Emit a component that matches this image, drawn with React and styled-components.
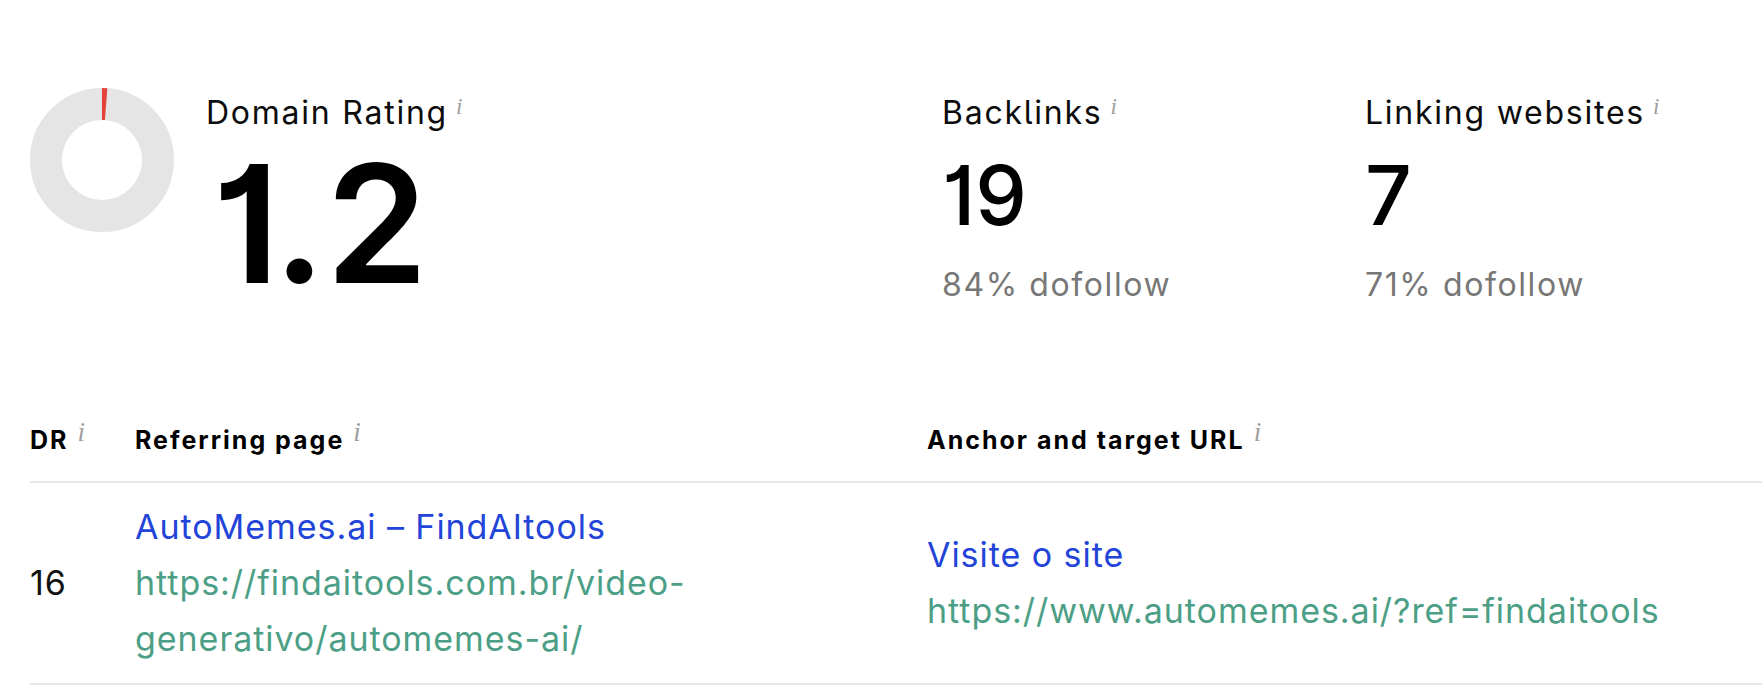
import styled, { createGlobalStyle } from "styled-components";

const GlobalStyle = createGlobalStyle`
  html, body {
    margin: 0;
    padding: 0;
    background: #fff;
  }
  body {
    font-family: Inter, "Noto Sans", "Liberation Sans", sans-serif;
    color: #111;
    -webkit-font-smoothing: antialiased;
  }
`;

const stats = [
  { label: "Backlinks", value: "19", sub: "84% dofollow", width: 423 },
  { label: "Linking websites", value: "7", sub: "71% dofollow" },
];

const Page = styled.div`
  padding-left: 30px;
  width: 1732px;
`;

const StatsRow = styled.section`
  display: flex;
  align-items: flex-start;
  padding-top: 88px;
`;

const RatingBlock = styled.div`
  display: flex;
  align-items: flex-start;
  gap: 32px;
  width: 912px;
  flex: none;
`;

const Stat = styled.div`
  display: flex;
  flex-direction: column;
  padding-top: 5px;
  width: ${(p) => (p.$w ? `${p.$w}px` : "auto")};
  flex: none;
`;

const Label = styled.div`
  font-size: 32px;
  line-height: 40px;
  font-weight: 400;
  letter-spacing: 0.055em;
  color: #0c0c0c;
  font-feature-settings: "cv05";
  white-space: nowrap;
`;

const Info = styled.span`
  font-family: "Liberation Serif", "DejaVu Serif", serif;
  font-style: italic;
  font-weight: 400;
  color: #9e9e9e;
  font-size: ${(p) => p.$size || 23}px;
  margin-left: ${(p) => p.$gap || 8}px;
  position: relative;
  top: ${(p) => -(p.$raise || 10)}px;
  letter-spacing: 0;
`;

const BigValue = styled.div`
  font-size: ${(p) => p.$size}px;
  line-height: 1;
  margin-top: ${(p) => p.$mt}px;
  margin-left: ${(p) => p.$ml || 0}px;
  font-weight: ${(p) => p.$weight || 500};
  font-feature-settings: "cv01";
  color: #000;
`;

const Sub = styled.div`
  margin-top: 28px;
  font-size: 32px;
  line-height: 40px;
  color: #777;
  letter-spacing: 0.05em;
`;

const Table = styled.section`
  margin-top: 119px;
`;

const Row = styled.div`
  display: grid;
  grid-template-columns: 105px 792px 1fr;
  align-items: ${(p) => (p.$head ? "end" : "center")};
  padding: ${(p) => (p.$head ? "0 0 26px" : "16px 0")};
  border-bottom: 2px solid #e6e6e6;
`;

const HeadCell = styled.div`
  font-size: 25px;
  line-height: 30px;
  font-weight: 700;
  letter-spacing: 0.08em;
  color: #000;
  white-space: nowrap;
`;

const Cell = styled.div`
  font-size: 34px;
  line-height: 56px;
  letter-spacing: 0.028em;
  color: #111;
  padding-right: ${(p) => p.$pr || 0}px;
`;

const Title = styled.a`
  display: block;
  color: #2244d8;
  text-decoration: none;
`;

const Url = styled.a`
  display: block;
  color: #4c9f86;
  text-decoration: none;
`;

function Donut({ value }) {
  const r = 56;
  const c = 2 * Math.PI * r;
  const part = (value / 100) * c;
  return (
    <svg width="144" height="144" viewBox="0 0 144 144" style={{ flex: "none" }}>
      <circle cx="72" cy="72" r={r} fill="none" stroke="#e5e5e5" strokeWidth="32" />
      <circle
        cx="72"
        cy="72"
        r={r}
        fill="none"
        stroke="#e2433b"
        strokeWidth="32"
        strokeDasharray={`${part} ${c}`}
        transform="rotate(-90 72 72)"
      />
    </svg>
  );
}

export default function App() {
  return (
    <>
      <GlobalStyle />
      <Page>
        <StatsRow>
          <RatingBlock>
            <Donut value={1.2} />
            <Stat>
              <Label>
                Domain Rating<Info>i</Info>
              </Label>
              <BigValue $size={164} $mt={5} $ml={6} $weight={600}>
                1.2
              </BigValue>
            </Stat>
          </RatingBlock>
          {stats.map((s) => (
            <Stat key={s.label} $w={s.width}>
              <Label>
                {s.label}
                <Info>i</Info>
              </Label>
              <BigValue $size={82} $mt={18}>
                {s.value}
              </BigValue>
              <Sub>{s.sub}</Sub>
            </Stat>
          ))}
        </StatsRow>

        <Table>
          <Row $head>
            <HeadCell>
              DR<Info $size={27} $gap={9} $raise={8}>i</Info>
            </HeadCell>
            <HeadCell>
              Referring page<Info $size={27} $gap={9} $raise={8}>i</Info>
            </HeadCell>
            <HeadCell>
              Anchor and target URL<Info $size={27} $gap={9} $raise={8}>i</Info>
            </HeadCell>
          </Row>
          <Row>
            <Cell>16</Cell>
            <Cell $pr={60}>
              <Title href="#">AutoMemes.ai – FindAItools</Title>
              <Url href="#">https://findaitools.com.br/video-generativo/automemes-ai/</Url>
            </Cell>
            <Cell>
              <Title href="#">Visite o site</Title>
              <Url href="#">https://www.automemes.ai/?ref=findaitools</Url>
            </Cell>
          </Row>
        </Table>
      </Page>
    </>
  );
}
